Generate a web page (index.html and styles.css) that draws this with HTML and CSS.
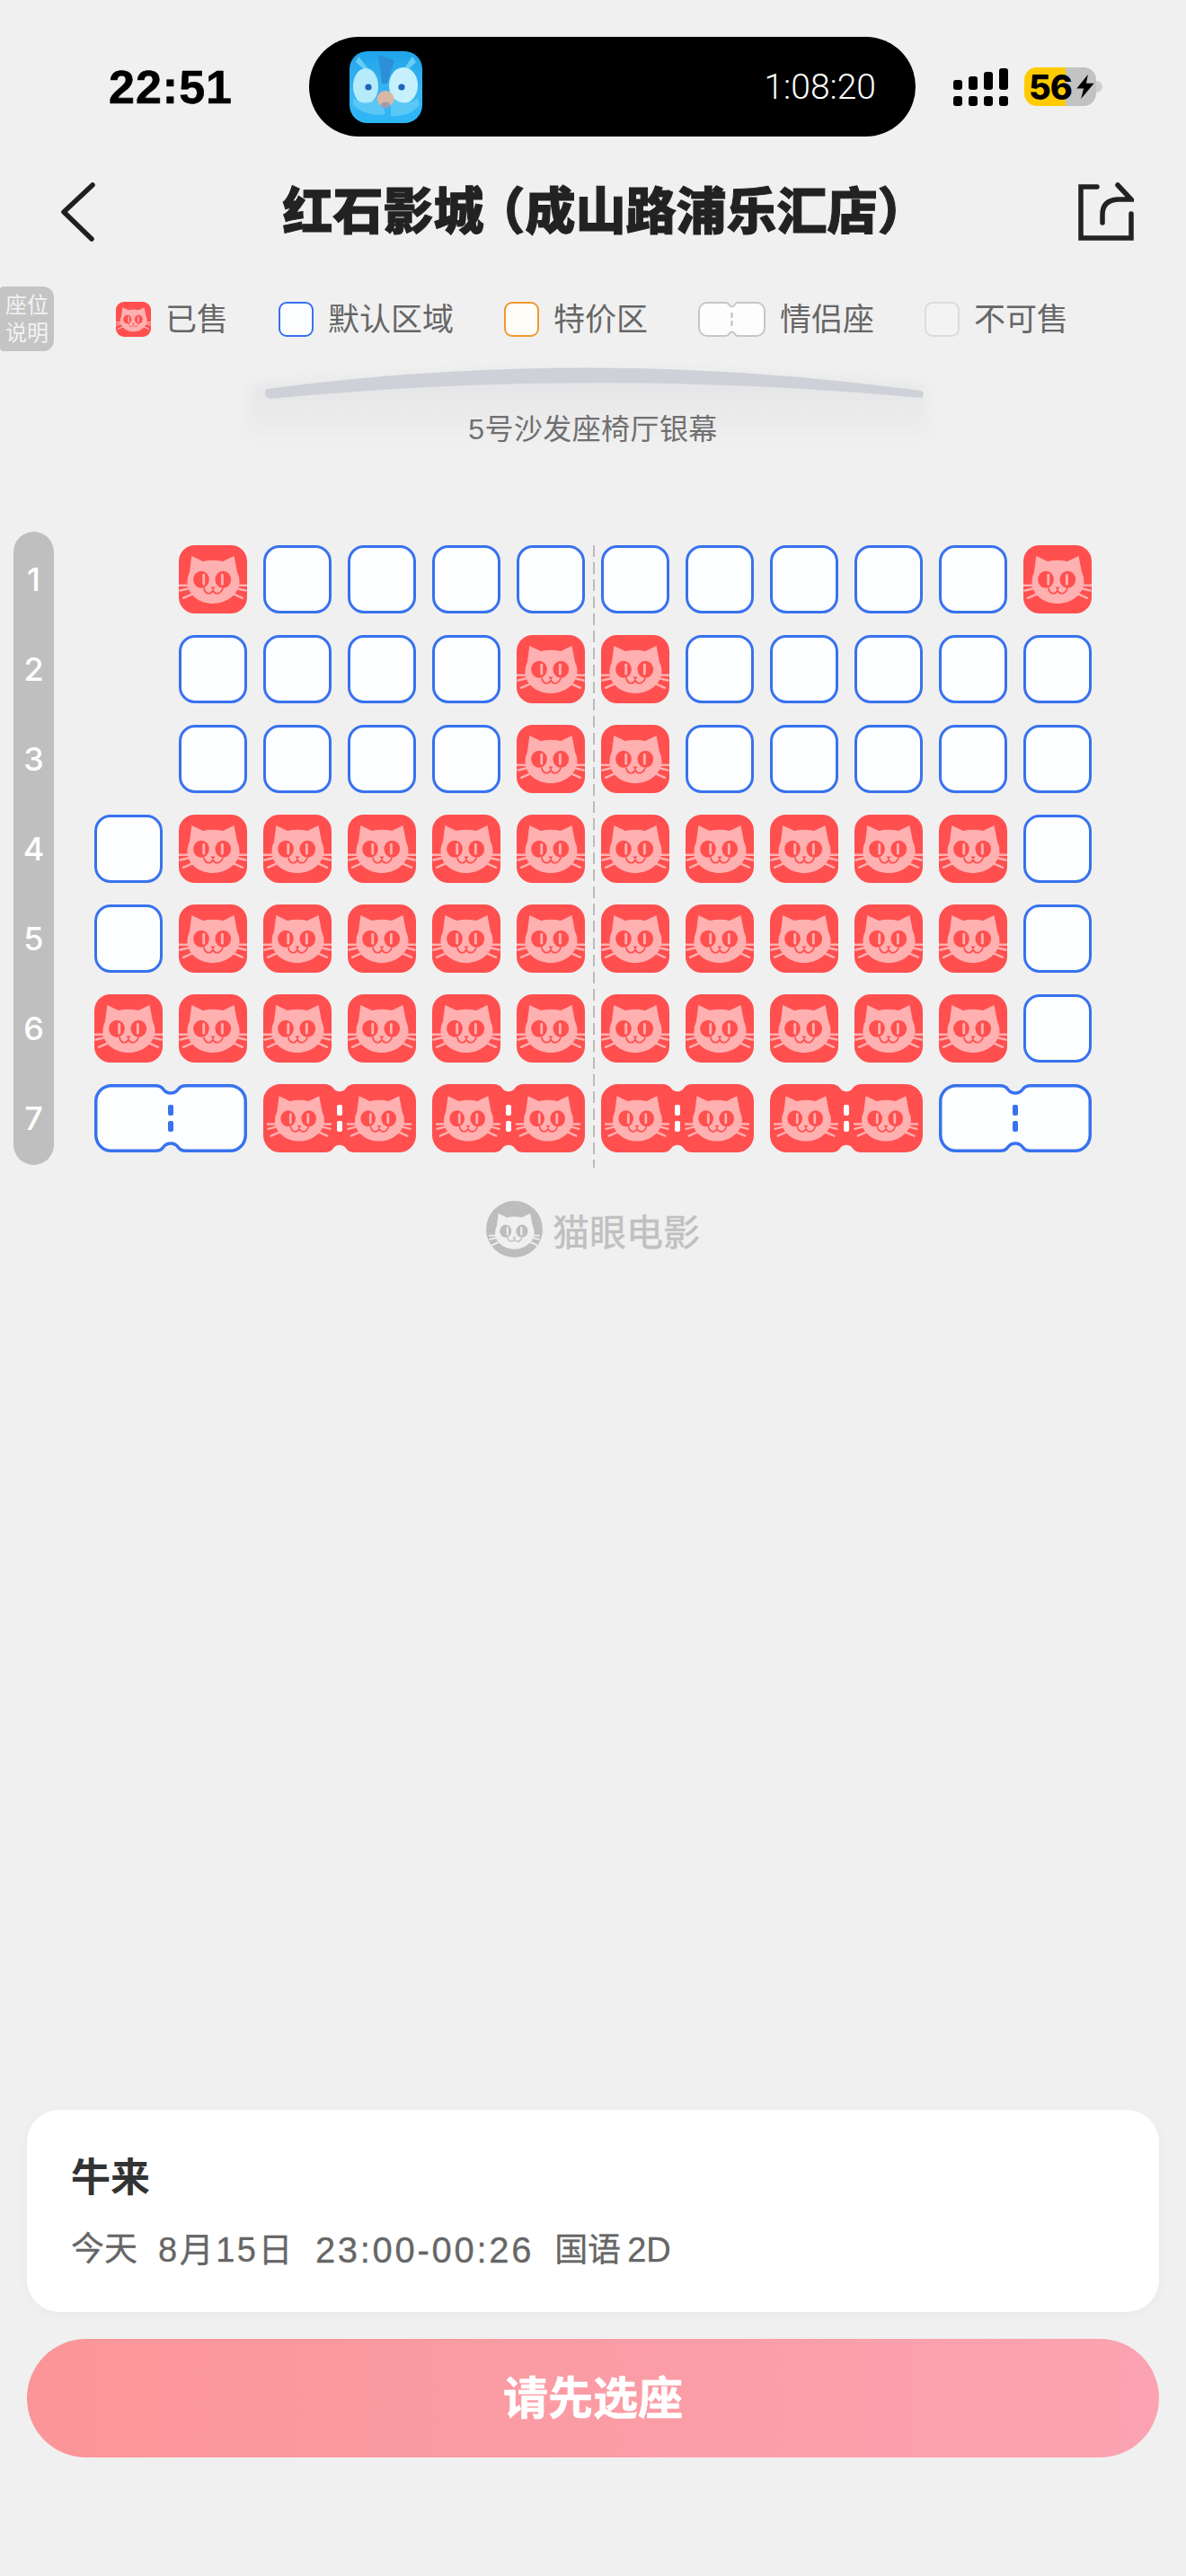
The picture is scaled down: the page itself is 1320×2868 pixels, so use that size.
FILE: index.html
```html
<!DOCTYPE html>
<html>
<head>
<meta charset="utf-8">
<title>选座</title>
<link rel="stylesheet" href="styles.css">
</head>
<body>
<svg class="defs" xmlns="http://www.w3.org/2000/svg">
  <symbol id="cat" viewBox="0 0 76 76">
    <path class="cat-face" d="M14.300 12 L27 18 Q38 15.500 49 18 L61.500 12 L65 30 Q68 36 67.500 42 C66 56 52 65 38 65 C24 65 10 56 9.500 42 Q9 36 12 30 Z"/>
    <ellipse class="cat-eye" cx="25" cy="38.300" rx="8.800" ry="9.500"/>
    <ellipse class="cat-eye" cx="49.300" cy="38.300" rx="8.800" ry="9.500"/>
    <rect class="cat-slit" x="26.300" y="31.800" width="2.900" height="13" rx="1.450"/>
    <rect class="cat-slit" x="46.900" y="31.800" width="2.900" height="13" rx="1.450"/>
    <path class="cat-mouth" d="M28 48 C29 54 35 56 38 50.500 C41 56 47 54 49 48"/>
    <path class="cat-nose" d="M35.500 46.500 H40.500 L38 50 Z"/>
    <path class="cat-whisker" d="M0.500 44.800 H11 M1.500 50.500 L11 48.200 M5 58.800 L14 54.800 M75.500 44.800 H65 M74.500 50.500 L65 48.200 M71 58.800 L62 54.800"/>
  </symbol>
  <symbol id="couple" viewBox="0 0 170 76">
    <path class="couple-shape" d="M19 1.750 H68 Q74 1.750 76.500 5.500 C79 9 81 10 85 10 C89 10 91 9 93.500 5.500 Q96 1.750 102 1.750 H151 A17.250 17.250 0 0 1 168.250 19 V57 A17.250 17.250 0 0 1 151 74.250 H102 Q96 74.250 93.500 70.500 C91 67 89 66 85 66 C81 66 79 67 76.500 70.500 Q74 74.250 68 74.250 H19 A17.250 17.250 0 0 1 1.750 57 V19 A17.250 17.250 0 0 1 19 1.750 Z"/>
    <rect class="couple-dash" x="82" y="23" width="6" height="12" rx="2"/>
    <rect class="couple-dash" x="82" y="41" width="6" height="12" rx="2"/>
  </symbol>
  <symbol id="couple-sold" viewBox="0 0 170 76">
    <use href="#couple" width="170" height="76"/>
    <use href="#cat" x="4" y="2" width="72" height="72"/>
    <use href="#cat" x="93" y="2" width="72" height="72"/>
  </symbol>
</svg>

<div class="status">
  <span class="clock">22:51</span>
  <div class="island">
    <svg class="owl" viewBox="0 0 81 80">
      <defs>
        <linearGradient id="owlbg" x1="0" y1="0" x2="0" y2="1">
          <stop offset="0" stop-color="#1fa5ea"/>
          <stop offset="0.6" stop-color="#3cb5f3"/>
          <stop offset="1" stop-color="#2bb6f6"/>
        </linearGradient>
      </defs>
      <rect width="81" height="80" rx="20" fill="url(#owlbg)"/>
      <path d="M32 4 L50 10 L42 36 L36 36 Z" fill="#2d8fd8"/>
      <path d="M10 6 L26 26 L20 24 L7 12 Z M70 6 L56 26 L62 24 L74 12 Z" fill="#67cdf5"/>
      <ellipse cx="18" cy="39" rx="14" ry="20" fill="#b5ebfb"/>
      <ellipse cx="60" cy="38" rx="16" ry="20" fill="#c5f0fc"/>
      <path d="M4 52 Q20 64 34 50 L40 70 Q20 74 4 60 Z M76 52 Q60 64 46 50 L46 72 Q66 74 78 60 Z" fill="#5ac8f6"/>
      <circle cx="21" cy="40" r="3.600" fill="#1f63b8"/>
      <circle cx="58" cy="40" r="3.600" fill="#1f63b8"/>
      <ellipse cx="40" cy="53" rx="9.500" ry="9" fill="#d8b8a6"/>
      <ellipse cx="40" cy="60" rx="5" ry="3.500" fill="#a39ab0"/>
    </svg>
    <span class="timer">1:08:20</span>
  </div>
  <svg class="signal" viewBox="0 0 61 42">
    <rect x="0" y="13" width="10" height="11" rx="3"/>
    <rect x="17" y="9" width="10" height="15" rx="3"/>
    <rect x="34" y="4" width="10" height="20" rx="3"/>
    <rect x="51" y="0" width="10" height="24" rx="3"/>
    <rect x="0" y="31" width="10" height="11" rx="3"/>
    <rect x="17" y="31" width="10" height="11" rx="3"/>
    <rect x="34" y="31" width="10" height="11" rx="3"/>
    <rect x="51" y="31" width="10" height="11" rx="3"/>
  </svg>
  <div class="battery">
    <span class="battery-level">56</span>
    <svg class="bolt" viewBox="0 0 20 28"><path d="M13 0 L0 16 H8 L5 28 L20 10 H11 Z"/></svg>
    <i class="battery-cap"></i>
  </div>
</div>

<div class="nav">
  <svg class="nav-back" viewBox="0 0 40 66"><path d="M36 3 L4 33 L35 63" /></svg>
  <h1 class="nav-title">红石影城<span class="paren">（</span>成山路浦乐汇店）</h1>
  <svg class="nav-share" viewBox="0 0 62 66">
    <path d="M21 5 H3 V62 H59 V35"/>
    <path d="M44 3 L59 19 H44 Q27 20 27 36 V45"/>
  </svg>
</div>

<div class="legend">
  <div class="legend-tag">座位<br>说明</div>
  <div class="legend-items">
    <div class="legend-item"><div class="mark mark-sold"><svg class="cat"><use href="#cat"/></svg></div>已售</div>
    <div class="legend-item"><div class="mark mark-default"></div>默认区域</div>
    <div class="legend-item"><div class="mark mark-special"></div>特价区</div>
    <div class="legend-item">
      <svg class="mark-couple" viewBox="0 0 75 39">
        <path d="M10 1 H31 Q33 1 34.500 3.500 Q36 5.500 37.500 5.500 Q39 5.500 40.500 3.500 Q42 1 44 1 H65 A9 9 0 0 1 74 10 V29 A9 9 0 0 1 65 38 H44 Q42 38 40.500 35.500 Q39 33.500 37.500 33.500 Q36 33.500 34.500 35.500 Q33 38 31 38 H10 A9 9 0 0 1 1 29 V10 A9 9 0 0 1 10 1 Z"/>
        <rect x="36.500" y="12" width="2" height="6"/>
        <rect x="36.500" y="21" width="2" height="6"/>
      </svg>情侣座
    </div>
    <div class="legend-item"><div class="mark mark-off"></div>不可售</div>
  </div>
</div>

<div class="screen">
  <svg class="screen-art" viewBox="0 0 840 110">
    <defs>
      <linearGradient id="glow" x1="0" y1="0" x2="0" y2="1">
        <stop offset="0" stop-color="#c9cad2" stop-opacity="0.32"/>
        <stop offset="1" stop-color="#c9cad2" stop-opacity="0"/>
      </linearGradient>
      <filter id="soft" x="-10%" y="-30%" width="120%" height="160%"><feGaussianBlur stdDeviation="8"/></filter>
    </defs>
    <path d="M40 30 Q420 2 788 30 L800 100 H30 Z" fill="url(#glow)" filter="url(#soft)"/>
    <path d="M57 34 Q420 -14 785 36 Q790 38 786 44 Q420 10 60 45 Q51 40 57 34 Z" fill="#cfd1d8"/>
  </svg>
</div>
<div class="screen-name">5号沙发座椅厅银幕</div>

<div class="map">
  <div class="row-bar">
    <span>1</span><span>2</span><span>3</span><span>4</span><span>5</span><span>6</span><span>7</span>
  </div>
  <div class="seats">
    <div class="seat-gap"></div>
    <div class="seat sold"><svg class="cat"><use href="#cat"/></svg></div>
    <div class="seat"></div><div class="seat"></div><div class="seat"></div><div class="seat"></div>
    <div class="seat"></div><div class="seat"></div><div class="seat"></div><div class="seat"></div><div class="seat"></div>
    <div class="seat sold"><svg class="cat"><use href="#cat"/></svg></div>

    <div class="seat-gap"></div>
    <div class="seat"></div><div class="seat"></div><div class="seat"></div><div class="seat"></div>
    <div class="seat sold"><svg class="cat"><use href="#cat"/></svg></div>
    <div class="seat sold"><svg class="cat"><use href="#cat"/></svg></div>
    <div class="seat"></div><div class="seat"></div><div class="seat"></div><div class="seat"></div><div class="seat"></div>

    <div class="seat-gap"></div>
    <div class="seat"></div><div class="seat"></div><div class="seat"></div><div class="seat"></div>
    <div class="seat sold"><svg class="cat"><use href="#cat"/></svg></div>
    <div class="seat sold"><svg class="cat"><use href="#cat"/></svg></div>
    <div class="seat"></div><div class="seat"></div><div class="seat"></div><div class="seat"></div><div class="seat"></div>

    <div class="seat"></div>
    <div class="seat sold"><svg class="cat"><use href="#cat"/></svg></div>
    <div class="seat sold"><svg class="cat"><use href="#cat"/></svg></div>
    <div class="seat sold"><svg class="cat"><use href="#cat"/></svg></div>
    <div class="seat sold"><svg class="cat"><use href="#cat"/></svg></div>
    <div class="seat sold"><svg class="cat"><use href="#cat"/></svg></div>
    <div class="seat sold"><svg class="cat"><use href="#cat"/></svg></div>
    <div class="seat sold"><svg class="cat"><use href="#cat"/></svg></div>
    <div class="seat sold"><svg class="cat"><use href="#cat"/></svg></div>
    <div class="seat sold"><svg class="cat"><use href="#cat"/></svg></div>
    <div class="seat sold"><svg class="cat"><use href="#cat"/></svg></div>
    <div class="seat"></div>

    <div class="seat"></div>
    <div class="seat sold"><svg class="cat"><use href="#cat"/></svg></div>
    <div class="seat sold"><svg class="cat"><use href="#cat"/></svg></div>
    <div class="seat sold"><svg class="cat"><use href="#cat"/></svg></div>
    <div class="seat sold"><svg class="cat"><use href="#cat"/></svg></div>
    <div class="seat sold"><svg class="cat"><use href="#cat"/></svg></div>
    <div class="seat sold"><svg class="cat"><use href="#cat"/></svg></div>
    <div class="seat sold"><svg class="cat"><use href="#cat"/></svg></div>
    <div class="seat sold"><svg class="cat"><use href="#cat"/></svg></div>
    <div class="seat sold"><svg class="cat"><use href="#cat"/></svg></div>
    <div class="seat sold"><svg class="cat"><use href="#cat"/></svg></div>
    <div class="seat"></div>

    <div class="seat sold"><svg class="cat"><use href="#cat"/></svg></div>
    <div class="seat sold"><svg class="cat"><use href="#cat"/></svg></div>
    <div class="seat sold"><svg class="cat"><use href="#cat"/></svg></div>
    <div class="seat sold"><svg class="cat"><use href="#cat"/></svg></div>
    <div class="seat sold"><svg class="cat"><use href="#cat"/></svg></div>
    <div class="seat sold"><svg class="cat"><use href="#cat"/></svg></div>
    <div class="seat sold"><svg class="cat"><use href="#cat"/></svg></div>
    <div class="seat sold"><svg class="cat"><use href="#cat"/></svg></div>
    <div class="seat sold"><svg class="cat"><use href="#cat"/></svg></div>
    <div class="seat sold"><svg class="cat"><use href="#cat"/></svg></div>
    <div class="seat sold"><svg class="cat"><use href="#cat"/></svg></div>
    <div class="seat"></div>

    <svg class="pair pair-free"><use href="#couple"/></svg>
    <svg class="pair pair-sold"><use href="#couple-sold"/></svg>
    <svg class="pair pair-sold"><use href="#couple-sold"/></svg>
    <svg class="pair pair-sold"><use href="#couple-sold"/></svg>
    <svg class="pair pair-sold"><use href="#couple-sold"/></svg>
    <svg class="pair pair-free"><use href="#couple"/></svg>
  </div>
  <div class="center-line"></div>
</div>

<div class="brand">
  <svg class="brand-logo" viewBox="0 0 63 63">
    <circle cx="31.500" cy="31.500" r="31.500" class="brand-ring"/>
    <use href="#cat" x="3" y="5" width="57" height="57"/>
  </svg>
  <span class="brand-name">猫眼电影</span>
</div>

<div class="bottom">
  <div class="card">
    <div class="card-title">牛来</div>
    <div class="card-info">
      <span>今天</span>
      <span class="date">8月15日</span>
      <span class="time">23:00-00:26</span>
      <span class="lang">国语<b>2D</b></span>
    </div>
  </div>
  <div class="submit">请先选座</div>
</div>
</body>
</html>
```

FILE: styles.css
```css
* { box-sizing: border-box; }
html, body { margin: 0; padding: 0; }
body {
  width: 1320px;
  height: 2868px;
  display: flex;
  flex-direction: column;
  background: #f0f0f0;
  font-family: "Liberation Sans", "Noto Sans CJK SC", sans-serif;
  overflow: hidden;
}
.defs { display: none; }

/* status bar */
.status {
  display: flex;
  align-items: center;
  height: 111px;
  margin-top: 41px;
  padding-left: 121px;
}
.clock {
  width: 223px;
  font-size: 52px;
  font-weight: 700;
  letter-spacing: 1px;
  -webkit-text-stroke: 0.6px #000;
  color: #000;
}
.island {
  display: flex;
  align-items: center;
  justify-content: space-between;
  width: 675px;
  height: 111px;
  padding: 0 44px 0 45px;
  border-radius: 56px;
  background: #000;
}
.owl { width: 81px; height: 80px; }
.timer {
  font-family: Roboto, sans-serif;
  font-weight: 300;
  font-size: 39px;
  color: #fff;
}
.signal { width: 61px; height: 42px; margin-left: 42px; fill: #000; }
.battery {
  position: relative;
  display: flex;
  align-items: center;
  width: 80px;
  height: 43px;
  margin-left: 18px;
  padding-left: 5px;
  border-radius: 14px;
  background: linear-gradient(90deg, #ffcb00 57%, #c2c2c2 57%);
}
.battery-level {
  font-family: Inter, sans-serif;
  font-weight: 800;
  font-size: 38px;
  letter-spacing: -1px;
  color: #000;
}
.bolt { position: absolute; left: 58px; top: 8px; width: 20px; height: 27px; fill: #000; }
.battery-cap {
  position: absolute;
  right: -7px;
  top: 15px;
  width: 7px;
  height: 13px;
  border-radius: 0 7px 7px 0;
  background: #cfcfcf;
}

/* title row */
.nav {
  position: relative;
  display: flex;
  align-items: center;
  justify-content: space-between;
  height: 66px;
  margin-top: 51px;
  padding: 0 58px 0 67px;
}
.nav-back { width: 40px; height: 66px; fill: none; stroke: #1f1f1f; stroke-width: 5.500; stroke-linecap: round; stroke-linejoin: round; }
.nav-share { width: 62px; height: 66px; fill: none; stroke: #222; stroke-width: 5.500; stroke-linecap: round; }
.nav-title {
  margin: 0 0 0 40px;
  font-size: 56px;
  font-weight: 900;
  line-height: 66px;
  -webkit-text-stroke: 1px #222;
  color: #222;
  white-space: nowrap;
}
.paren { margin-left: 18px; font-feature-settings: "halt"; }

/* legend */
.legend {
  display: flex;
  align-items: center;
  margin-top: 50px;
}
.legend-tag {
  width: 60px;
  height: 72px;
  padding-top: 5px;
  border-radius: 4px 12px 12px 4px;
  background: #c4c4c4;
  font-size: 24px;
  line-height: 31px;
  text-align: center;
  color: #f3f3f3;
}
.legend-items {
  display: flex;
  align-items: center;
  gap: 56px;
  margin-left: 69px;
}
.legend-item {
  display: flex;
  align-items: center;
  gap: 16px;
  font-size: 35px;
  line-height: 39px;
  color: #666;
}
.mark { position: relative; width: 39px; height: 39px; border-radius: 9px; }
.mark-sold { background: #ff4f4f; }
.mark-default { border: 2.500px solid #3772ef; background: #fdfeff; }
.mark-special { border: 2.500px solid #f0982f; background: #fffdf8; }
.mark-off { border: 2px solid #dcdcdc; background: #f3f3f3; }
.mark-couple { width: 75px; height: 39px; }
.mark-couple path { fill: #fdfdfd; stroke: #c6c6c6; stroke-width: 2; }
.mark-couple rect { fill: #bbb; }

/* screen */
.screen {
  position: relative;
  height: 59px;
  margin-top: 8px;
}
.screen-art {
  position: absolute;
  left: 240px;
  top: 0;
  width: 840px;
  height: 110px;
  overflow: visible;
}
.screen-name {
  position: relative;
  font-size: 32px;
  line-height: 40px;
  letter-spacing: 0.400px;
  text-align: center;
  color: #707070;
}

/* seat map */
.map {
  position: relative;
  display: flex;
  margin-top: 94px;
  padding-left: 15px;
}
.row-bar {
  display: flex;
  flex-direction: column;
  gap: 24px;
  width: 45px;
  height: 705px;
  padding-top: 15px;
  border-radius: 23px;
  background: #bfbfbf;
  font-family: Inter, sans-serif;
  font-weight: 500;
  font-size: 36px;
  color: #fff;
}
.row-bar span {
  display: flex;
  align-items: center;
  justify-content: center;
  height: 76px;
}
.seats {
  display: grid;
  grid-template-columns: repeat(12, 76px);
  grid-auto-rows: 76px;
  gap: 24px 18px;
  margin-left: 45px;
  padding-top: 15px;
}
.seat {
  position: relative;
  border: 3.500px solid #3772ef;
  border-radius: 18px;
  background: #fdfeff;
}
.seat.sold { border: 0; background: #ff4f4f; }
.cat { display: block; width: 100%; height: 100%; }
.cat-face { fill: var(--cat-face, #ffb0b0); }
.cat-eye { fill: var(--cat-mark, #ff4f4f); }
.cat-slit { fill: var(--cat-face, #ffb0b0); }
.cat-nose { fill: var(--cat-mark, #ff4f4f); }
.cat-mouth { fill: none; stroke: var(--cat-mark, #ff4f4f); stroke-width: 1.700; stroke-linecap: round; }
.cat-whisker { fill: none; stroke: var(--cat-face, #ffb0b0); stroke-width: 2.500; stroke-linecap: round; }

.pair { grid-column: span 2; width: 170px; height: 76px; }
.pair-free { --pair-fill: #fdfeff; --pair-line: #3772ef; --pair-dash: #3772ef; }
.pair-sold { --pair-fill: #ff4f4f; --pair-line: #ff4f4f; --pair-dash: #fff; }
.couple-shape { fill: var(--pair-fill); stroke: var(--pair-line); stroke-width: 3.500; }
.couple-dash { fill: var(--pair-dash); }

.center-line {
  position: absolute;
  left: 660px;
  top: 15px;
  width: 1.500px;
  height: 693px;
  background: repeating-linear-gradient(180deg, #bbb 0, #bbb 13px, transparent 13px, transparent 19px);
}

/* watermark */
.brand {
  display: flex;
  align-items: center;
  justify-content: center;
  gap: 11px;
  height: 63px;
  margin-top: 40px;
  --cat-face: #f0f0f0;
  --cat-mark: #bdbdbd;
}
.brand-logo { width: 63px; height: 63px; }
.brand-ring { fill: #bdbdbd; }
.brand-name {
  font-size: 41px;
  font-weight: 400;
  -webkit-text-stroke: 0.500px #c0c0c0;
  color: #c0c0c0;
}

/* bottom */
.bottom {
  display: flex;
  flex-direction: column;
  gap: 30px;
  margin-top: auto;
  padding: 0 30px 132px;
}
.card {
  height: 225px;
  padding: 51px 49px 0;
  border-radius: 36px;
  background: #fff;
  box-shadow: 0 2px 14px rgba(0, 0, 0, 0.03);
}
.card-title {
  font-size: 44px;
  font-weight: 700;
  line-height: 50px;
  color: #333;
}
.card-info {
  display: flex;
  gap: 23px;
  margin-top: 30px;
  font-size: 37px;
  line-height: 50px;
  color: #666;
  -webkit-text-stroke: 0.300px #666;
}
.date { font-size: 38px; letter-spacing: 2.500px; }
.time { font-size: 40px; letter-spacing: 2.700px; }
.lang b { margin-left: 7px; font-weight: 400; font-size: 38px; }
.submit {
  height: 132px;
  border-radius: 66px;
  background: linear-gradient(90deg, #fb9598, #fba3b2);
  font-size: 50px;
  font-weight: 700;
  line-height: 134px;
  -webkit-text-stroke: 0.600px #fff;
  text-align: center;
  color: #fff;
}
```
